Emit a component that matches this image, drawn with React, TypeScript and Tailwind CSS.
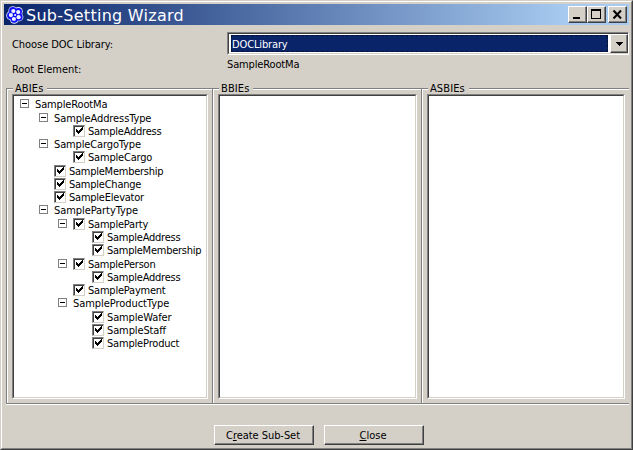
import type { ReactNode } from "react";

type Node = { label: string; h: string; indent: string; box?: boolean; checked?: boolean; track: string };

const rows: Node[] = [
  { label: "SampleRootMa", h: "h-[14px] pb-px", indent: "pl-[6px]", box: true, track: "tracking-[-0.14px]" },
  { label: "SampleAddressType", h: "h-[13px]", indent: "pl-[25px]", box: true, track: "tracking-[-0.1px]" },
  { label: "SampleAddress", h: "h-[13px]", indent: "pl-[59px]", checked: true, track: "tracking-[-0.24px]" },
  { label: "SampleCargoType", h: "h-[13px]", indent: "pl-[25px]", box: true, track: "tracking-[-0.13px]" },
  { label: "SampleCargo", h: "h-[14px] pb-px", indent: "pl-[59px]", checked: true, track: "tracking-[-0.2px]" },
  { label: "SampleMembership", h: "h-[13px]", indent: "pl-[40px]", checked: true, track: "tracking-[-0.25px]" },
  { label: "SampleChange", h: "h-[13px]", indent: "pl-[40px]", checked: true, track: "tracking-[-0.24px]" },
  { label: "SampleElevator", h: "h-[13px]", indent: "pl-[40px]", checked: true, track: "tracking-[-0.23px]" },
  { label: "SamplePartyType", h: "h-[14px] pb-px", indent: "pl-[25px]", box: true, track: "tracking-[-0.07px]" },
  { label: "SampleParty", h: "h-[13px]", indent: "pl-[44px]", box: true, checked: true, track: "tracking-[-0.22px]" },
  { label: "SampleAddress", h: "h-[13px]", indent: "pl-[78px]", checked: true, track: "tracking-[-0.24px]" },
  { label: "SampleMembership", h: "h-[14px] pb-px", indent: "pl-[78px]", checked: true, track: "tracking-[-0.25px]" },
  { label: "SamplePerson", h: "h-[13px]", indent: "pl-[44px]", box: true, checked: true, track: "tracking-[-0.24px]" },
  { label: "SampleAddress", h: "h-[13px]", indent: "pl-[78px]", checked: true, track: "tracking-[-0.24px]" },
  { label: "SamplePayment", h: "h-[13px]", indent: "pl-[59px]", checked: true, track: "tracking-[-0.22px]" },
  { label: "SampleProductType", h: "h-[14px] pb-px", indent: "pl-[44px]", box: true, track: "tracking-[-0.06px]" },
  { label: "SampleWafer", h: "h-[13px]", indent: "pl-[78px]", checked: true, track: "tracking-[-0.13px]" },
  { label: "SampleStaff", h: "h-[13px]", indent: "pl-[78px]", checked: true, track: "tracking-[-0.12px]" },
  { label: "SampleProduct", h: "h-[13px]", indent: "pl-[78px]", checked: true, track: "tracking-[-0.18px]" },
];

const raised =
  "border border-t-white border-l-white border-r-[#404040] border-b-[#404040] shadow-[inset_-1px_-1px_0_#808080] bg-[#d4d0c8]";
const sunken =
  "border border-t-[#808080] border-l-[#808080] border-r-white border-b-white";

function Expander() {
  return (
    <span className="mr-[6px] flex h-[9px] w-[9px] shrink-0 items-center justify-center border border-[#808080] bg-white">
      <span className="h-px w-[5px] bg-black" />
    </span>
  );
}

function Check() {
  return (
    <span className="mt-px mr-[3px] block h-[12px] w-[12px] shrink-0 border border-t-[#808080] border-l-[#808080] border-r-[#d4d0c8] border-b-[#d4d0c8] bg-white shadow-[inset_1px_1px_0_#404040]">
      <svg width="10" height="10" viewBox="0 0 10 10" shapeRendering="crispEdges" className="block">
        <path d="M2 3h1v3h-1zM3 4h1v3h-1zM4 5h1v3h-1zM5 4h1v3h-1zM6 3h1v3h-1zM7 2h1v3h-1zM8 1h1v3h-1z" fill="#000" />
      </svg>
    </span>
  );
}

function Group({ title, width, list, children }: { title: string; width: string; list: string; children?: ReactNode }) {
  return (
    <section className={`flex h-[322px] flex-col ${width}`}>
      <div className="flex h-[14px] items-start">
        <span className="mt-[6px] h-[8px] w-[7px] shrink-0 border-t border-l border-[#808080] shadow-[inset_1px_1px_0_#fff]" />
        <span className="h-[14px] shrink-0 px-[2px] text-[11px] leading-[13px] tracking-[0.1px]">{title}</span>
        <span className="mt-[6px] ml-[2px] h-[2px] grow border-t border-[#808080] bg-white" />
      </div>
      <div className="grow border-b border-l border-[#808080] pl-[5px] shadow-[inset_1px_0_0_#fff,0_1px_0_#fff]">
        <div className={`mt-[-2px] h-[305px] bg-white ${sunken} ${list}`}>
          <div className="h-full w-full border border-t-[#404040] border-l-[#404040] border-r-[#d4d0c8] border-b-[#d4d0c8]">{children}</div>
        </div>
      </div>
    </section>
  );
}

export default function App() {
  return (
    <main className="h-[450px] w-[633px] overflow-hidden border border-t-[#d4d0c8] border-l-[#d4d0c8] border-r-[#404040] border-b-[#404040] bg-[#d4d0c8] [font-family:'DejaVu_Sans_Condensed','DejaVu_Sans',sans-serif] [font-stretch:condensed] text-[11px] text-black">
      <div className="h-full w-full border border-t-white border-l-white border-r-[#808080] border-b-[#808080] pt-[2px] pl-[2px]">
        <header className="flex h-[21px] w-[625px] items-center bg-[linear-gradient(90deg,#0a246a_0%,#a6caf0_90%)] pr-[2px] pl-[2px]">
          <svg width="18" height="18" viewBox="0 0 18 18">
            <g fill="#dfe2ff">
              <circle cx="6.8" cy="4.6" r="4.4" />
              <circle cx="12.4" cy="5.4" r="4.4" />
              <circle cx="13" cy="11" r="4.4" />
              <circle cx="8.2" cy="13.3" r="4.4" />
              <circle cx="4.6" cy="9.6" r="4.4" />
            </g>
            <g fill="#1010ff">
              <circle cx="6.8" cy="4.8" r="3.7" />
              <circle cx="12.3" cy="5.6" r="3.7" />
              <circle cx="12.9" cy="11" r="3.7" />
              <circle cx="8.2" cy="13.1" r="3.7" />
              <circle cx="4.8" cy="9.6" r="3.7" />
              <circle cx="9" cy="9" r="4" />
            </g>
            <g fill="#f0f1ff">
              <circle cx="7.3" cy="5" r="2.1" />
              <circle cx="12.2" cy="6.1" r="2.1" />
              <circle cx="12.6" cy="11.2" r="2.1" />
              <circle cx="7.9" cy="13" r="2.1" />
              <circle cx="4.9" cy="9.1" r="2.1" />
              <circle cx="9.1" cy="9" r="1.1" />
            </g>
          </svg>
          <h1 className="ml-[2px] grow whitespace-nowrap pt-px text-[16px] leading-[21px] tracking-[0.27px] text-white [font-family:'DejaVu_Sans',sans-serif] [font-stretch:normal]">Sub-Setting Wizard</h1>
          <button className={`h-[17px] w-[19px] ${raised}`}>
            <svg width="17" height="15" shapeRendering="crispEdges"><path d="M4 10h7v2H4z" /></svg>
          </button>
          <button className={`h-[17px] w-[19px] ${raised}`}>
            <svg width="17" height="15" shapeRendering="crispEdges"><path fillRule="evenodd" d="M3 2h10v10H3zM4 4v7h8V4z" /></svg>
          </button>
          <button className={`ml-[2px] h-[17px] w-[19px] ${raised}`}>
            <svg width="17" height="15"><path d="M4.5 3.5L12 11.5M12 3.5L4.5 11.5" stroke="#000" strokeWidth="2" /></svg>
          </button>
        </header>
        <div className="flex h-[52px] pt-[7px]">
          <div className="w-[223px] pl-[8px]">
            <p className="mt-[5px] h-[16px] leading-[16px] tracking-[-0.06px]">Choose DOC Library:</p>
            <p className="mt-[9px] h-[16px] leading-[16px] tracking-[-0.04px]">Root Element:</p>
          </div>
          <div className="w-[402px]">
            <div className={`flex h-[23px] bg-white ${sunken}`}>
              <div className="flex w-full border border-r-0 border-t-[#404040] border-l-[#404040] border-b-[#d4d0c8]">
                <div className="mt-px ml-[2px] mr-[2px] h-[17px] grow border border-dashed border-[#05102e] bg-[#0a246a] text-[11px] leading-[17px] tracking-[-0.14px] text-white">DOCLibrary</div>
                <button className={`h-[19px] w-[18px] shrink-0 ${raised}`}>
                  <svg width="16" height="17" shapeRendering="crispEdges"><path d="M5 7h7v1H5zM6 8h5v1H6zM7 9h3v1H7zM8 10h1v1H8z" /></svg>
                </button>
              </div>
            </div>
            <p className="mt-[2px] h-[16px] leading-[16px] tracking-[-0.14px]">SampleRootMa</p>
          </div>
        </div>
        <div className="flex pt-[5px] pl-[2px]">
          <Group title="ABIEs" width="w-[206px]" list="w-[196px]">
            <ul className="pt-[1px]">
              {rows.map((r, i) => (
                <li key={i} className={`flex items-center whitespace-nowrap leading-[13px] ${r.h} ${r.indent}`}>
                  {r.box && <Expander />}
                  {r.checked && <Check />}
                  <span className={`mt-[2px] ${r.track}`}>{r.label}</span>
                </li>
              ))}
            </ul>
          </Group>
          <Group title="BBIEs" width="w-[209px]" list="w-[199px]" />
          <Group title="ASBIEs" width="w-[208px]" list="w-[198px]" />
        </div>
        <footer className="flex gap-[10px] pt-[21px] pl-[210px]">
          <button className={`h-[20px] w-[100px] pr-[2px] leading-[17px] tracking-[-0.05px] ${raised}`}>C<u>r</u>eate Sub-Set</button>
          <button className={`h-[20px] w-[100px] pr-[2px] leading-[17px] ${raised}`}><u>C</u>lose</button>
        </footer>
      </div>
    </main>
  );
}
